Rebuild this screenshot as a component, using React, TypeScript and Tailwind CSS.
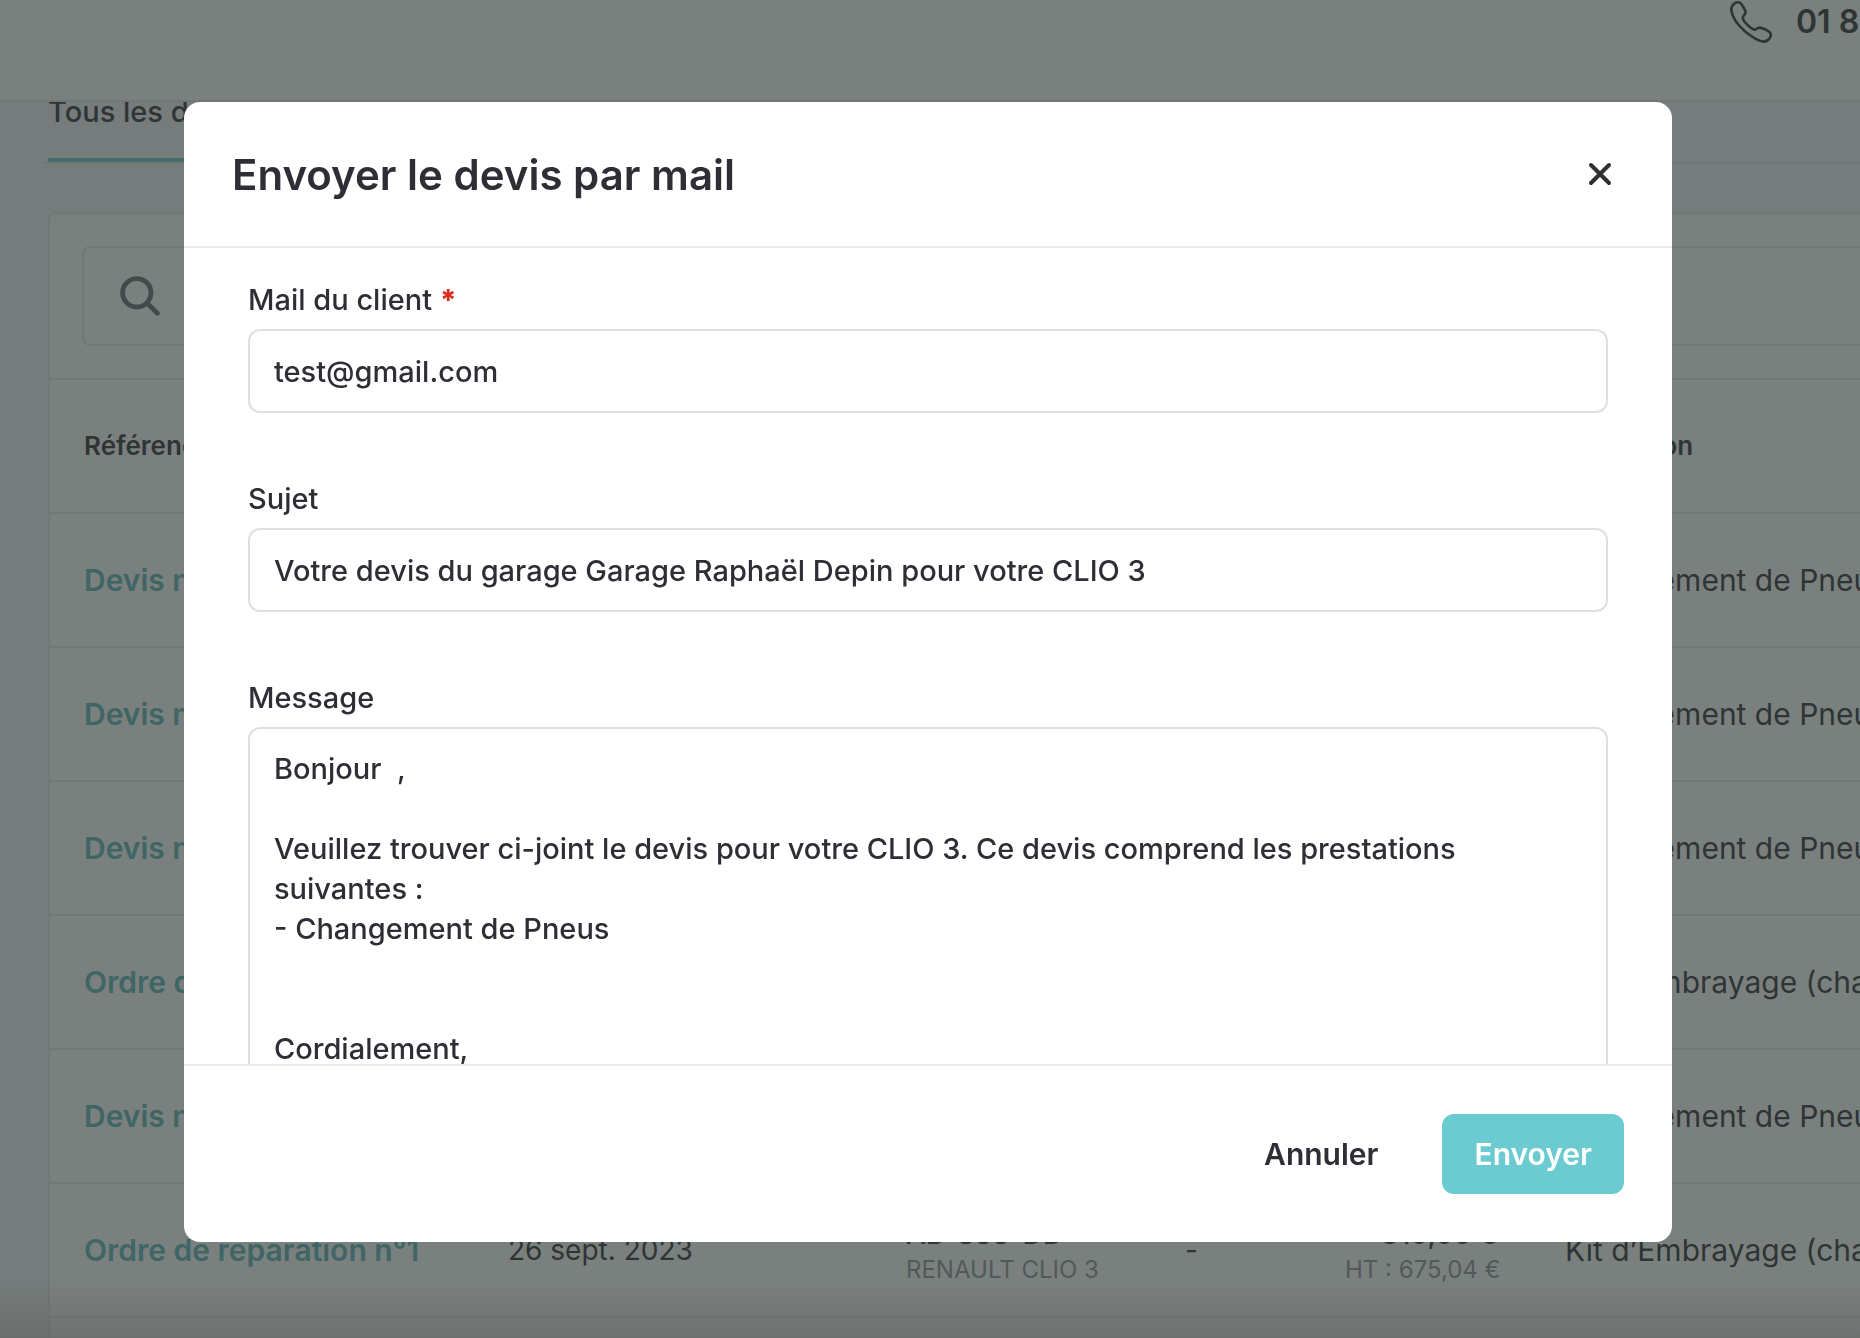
import React, { useState } from 'react';

interface QuoteRow {
  id: number;
  reference: string;
  date: string;
  plate: string;
  vehicle: string;
  status: string;
  total: string;
  totalHt: string;
  operation: string;
}

const TIRES = { total: '240,00 €', totalHt: 'HT : 200,00 €', operation: 'Changement de Pneus' };
const CLUTCH = { total: '810,05 €', totalHt: 'HT : 675,04 €', operation: 'Kit d’Embrayage (changement)' };
const CAR = { date: '26 sept. 2023', plate: 'AB-333-DD', vehicle: 'RENAULT CLIO 3', status: '-' };

const ROWS: QuoteRow[] = [
  { id: 1, reference: 'Devis n°4', ...CAR, ...TIRES },
  { id: 2, reference: 'Devis n°3', ...CAR, ...TIRES },
  { id: 3, reference: 'Devis n°2', ...CAR, ...TIRES },
  { id: 4, reference: 'Ordre de réparation n°2', ...CAR, ...CLUTCH },
  { id: 5, reference: 'Devis n°1', ...CAR, ...TIRES },
  { id: 6, reference: 'Ordre de réparation n°1', ...CAR, ...CLUTCH },
];

const DEFAULT_MESSAGE = `Bonjour  ,

Veuillez trouver ci-joint le devis pour votre CLIO 3. Ce devis comprend les prestations suivantes :
- Changement de Pneus


Cordialement,
Garage Raphaël Depin`;

const PhoneIcon = () => (
  <svg className="size-[42px] shrink-0" viewBox="0 0 42 42" fill="none" stroke="currentColor" strokeWidth="2.6" strokeLinejoin="round" aria-hidden="true">
    <path d="M1.4 9.6C1 6.6 2.4 4 4.6 2.4C6.6 1 9.4 0.8 11 2.6C13 5 14.6 8 15.6 10.8C16.2 13 12.6 14.4 12.8 16.8C13.2 20.4 20.4 27.6 24.4 28.8C26 29 27.4 26.4 30 26.6C33.6 27.2 37.2 29 39.8 31.2C41.2 32.8 40.8 35.2 39.8 37C38.4 39.2 36.4 40.6 33.8 40.6C29.6 40.6 23.4 37 16 31.2C9.2 25.4 2.4 17.4 1.4 9.6Z" />
  </svg>
);

const SearchIcon = () => (
  <svg className="size-10 shrink-0" viewBox="0 0 40 40" fill="none" stroke="currentColor" strokeWidth="4.8" strokeLinecap="round" aria-hidden="true">
    <circle cx="16.8" cy="16.8" r="14.2" />
    <path d="M27 27L37.4 37.2" />
  </svg>
);

const CloseIcon = () => (
  <svg className="size-6" viewBox="0 0 24 24" fill="none" stroke="currentColor" strokeWidth="4" strokeLinecap="round" aria-hidden="true">
    <path d="M3 3L21 21M21 3L3 21" />
  </svg>
);

const QuotesPage = () => (
  <div className="min-h-screen bg-[#f1f3f6]">
    <header className="relative z-10 flex h-[102px] border-b-2 border-[#e6e7e8] bg-white">
      <a href="tel:0187" className="ml-auto flex w-[130px] h-11 items-center gap-6 whitespace-nowrap text-[32px] font-semibold">
        <PhoneIcon />
        01 87
      </a>
    </header>

    <nav className="-mt-[10px] ml-11 border-b-2 border-[#e0e2e5]">
      <a href="#documents" className="ml-1 inline-block border-b-4 border-[#6bcbd1] pb-[26px] align-top text-[29px] leading-10 font-medium">
        Tous les documents
      </a>
    </nav>

    <section className="mt-12 ml-12 w-max min-w-full rounded-lg border-2 border-[#e6e7e8] bg-white">
      <div className="p-8">
        <label className="flex h-[100px] items-center gap-[22px] rounded-lg border-2 border-[#e6e7e8] pl-9 text-[#666b75]">
          <SearchIcon />
          <input type="search" aria-label="Rechercher" placeholder="Rechercher" className="flex-1 text-[28px] outline-none" />
        </label>
      </div>

      <table className="w-[2030px] table-fixed border-collapse text-left text-[28px] leading-10 whitespace-nowrap">
        <colgroup>
          <col className="w-[424px]" />
          <col className="w-[398px]" />
          <col className="w-[279px]" />
          <col className="w-[160px]" />
          <col className="w-[220px]" />
          <col />
        </colgroup>
        <thead className="text-[26px]">
          <tr className="h-[134px] border-y-2 border-[#e6e7e8]">
            <th className="px-[34px] font-semibold">Référence</th>
            <th className="px-[34px] font-semibold">Date</th>
            <th className="px-[34px] font-semibold">Véhicule</th>
            <th className="px-[34px] font-semibold">Statut</th>
            <th className="px-[34px] text-right font-semibold">Total</th>
            <th className="px-[34px] font-semibold">Prestation</th>
          </tr>
        </thead>
        <tbody>
          {ROWS.map((row) => (
            <tr key={row.id} className="h-[134px] border-b-2 border-[#e6e7e8]">
              <td className="px-[34px]">
                <a href={`#document-${row.id}`} className="text-[30px] font-semibold text-[#5bb5bb]">{row.reference}</a>
              </td>
              <td className="px-[34px]">{row.date}</td>
              <td className="px-[34px]">
                <div className="font-medium">{row.plate}</div>
                <div className="text-2xl text-[#8f939c]">{row.vehicle}</div>
              </td>
              <td className="px-[34px]">{row.status}</td>
              <td className="px-[34px] text-right">
                <div className="font-medium">{row.total}</div>
                <div className="text-2xl text-[#8f939c]">{row.totalHt}</div>
              </td>
              <td className="px-[34px] text-[30px]">{row.operation}</td>
            </tr>
          ))}
        </tbody>
      </table>
      <div className="h-24" />
    </section>
  </div>
);

const SendQuoteModal = () => {
  const [email, setEmail] = useState('test@gmail.com');
  const [subject, setSubject] = useState('Votre devis du garage Garage Raphaël Depin pour votre CLIO 3');
  const [message, setMessage] = useState(DEFAULT_MESSAGE);

  return (
    <div role="dialog" aria-modal="true" aria-labelledby="modal-title" className="relative mx-auto flex h-full w-full max-w-[1488px] flex-col overflow-hidden rounded-2xl bg-white">
      <div className="flex h-[146px] shrink-0 items-center justify-between border-b-2 border-[#e8e9ea] px-12">
        <h2 id="modal-title" className="text-[42px] font-semibold">Envoyer le devis par mail</h2>
        <button type="button" aria-label="Fermer" className="flex size-12 items-center justify-center">
          <CloseIcon />
        </button>
      </div>

      <form id="send-quote" className="flex min-h-0 flex-1 flex-col gap-[66px] overflow-hidden px-16 pt-8 text-[29px] leading-10 font-medium">
        <div className="flex flex-col gap-[9px]">
          <label htmlFor="email">
            Mail du client <span className="font-extrabold text-[#d92d20]">*</span>
          </label>
          <input
            id="email"
            type="email"
            value={email}
            onChange={(e) => setEmail(e.target.value)}
            className="h-[84px] w-full rounded-xl border-2 border-[#dedee3] px-6 outline-none"
          />
        </div>

        <div className="flex flex-col gap-[9px]">
          <label htmlFor="subject">Sujet</label>
          <input
            id="subject"
            type="text"
            value={subject}
            onChange={(e) => setSubject(e.target.value)}
            className="h-[84px] w-full rounded-xl border-2 border-[#dedee3] px-6 outline-none"
          />
        </div>

        <div className="flex flex-col gap-[9px]">
          <label htmlFor="message">Message</label>
          <textarea
            id="message"
            rows={9}
            value={message}
            onChange={(e) => setMessage(e.target.value)}
            className="w-full resize-none rounded-xl border-2 border-[#dedee3] px-6 py-5 outline-none"
          />
        </div>
      </form>

      <div className="flex shrink-0 items-center justify-end gap-8 border-t-2 border-[#e8e9ea] p-12 text-[30px] font-semibold">
        <button type="button" className="h-20 px-8">Annuler</button>
        <button type="submit" form="send-quote" className="h-20 rounded-xl bg-[#6bcbd1] px-8 text-white">Envoyer</button>
      </div>
    </div>
  );
};

const App: React.FC = () => {
  return (
    <div className="h-screen overflow-hidden font-['Inter',sans-serif] text-[#2f2e36]">
      <QuotesPage />

      {/* Backdrop and dialog */}
      <div className="fixed inset-0 z-20 bg-[rgba(47,56,53,0.64)] pt-[102px] pr-1 pb-24">
        <div className="absolute inset-x-0 bottom-0 h-14 bg-linear-to-b from-transparent to-[#5b5654]/35" />
        <SendQuoteModal />
      </div>
    </div>
  );
};

export default App;
